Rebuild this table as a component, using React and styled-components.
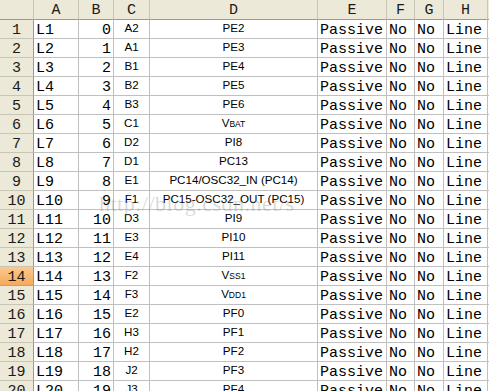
import React from "react";
import styled, { createGlobalStyle } from "styled-components";

const GlobalStyle = createGlobalStyle`
    html, body {
        margin: 0;
        padding: 0;
        background: #ffffff;
    }
    body {
        width: 489px;
        height: 391px;
        overflow: hidden;
    }
`;

const Wrap = styled.div`
    position: relative;
    width: 489px;
    height: 391px;
    overflow: hidden;
    background: #ffffff;
`;

const Sheet = styled.div`
    display: grid;
    grid-template-columns: 34px 45px 35px 36px 168px 69px 28px 29px 44px 40px;
    grid-template-rows: 20px;
    grid-auto-rows: 19px;
    width: 528px;
`;

const Cell = styled.div`
    box-sizing: border-box;
    border-right: 1px solid #c0c0c0;
    border-bottom: 1px solid #c0c0c0;
    overflow: hidden;
    white-space: nowrap;
    color: #000000;
`;

const MonoCell = styled(Cell)`
    display: flex;
    align-items: flex-end;
    justify-content: ${(p) => (p.$right ? "flex-end" : "flex-start")};
    padding: 0 2px 0 2px;
    font-family: "Liberation Mono", "DejaVu Sans Mono", monospace;
    font-size: 15px;
    line-height: 15px;
`;

const PinCell = styled(Cell)`
    text-align: center;
    padding-top: 2px;
    font-family: "Liberation Sans", Arial, sans-serif;
    font-size: 11.6px;
    line-height: 12px;
`;

const ColHead = styled.div`
    box-sizing: border-box;
    display: flex;
    align-items: flex-end;
    justify-content: center;
    padding-bottom: 1px;
    background: #ece9d8;
    border-right: 1px solid #c9c5b5;
    border-bottom: 1px solid #9d9a8c;
    font-family: "Liberation Mono", "DejaVu Sans Mono", monospace;
    font-size: 15px;
    line-height: 15px;
    color: #1a1a1a;
`;

const RowHead = styled.div`
    box-sizing: border-box;
    display: flex;
    align-items: flex-end;
    justify-content: center;
    background: ${(p) => (p.$active ? "linear-gradient(#fbc98f, #f5a95c)" : "#ece9d8")};
    border-right: 1px solid #9d9a8c;
    border-bottom: 1px solid ${(p) => (p.$active ? "#e09a50" : "#c9c5b5")};
    font-family: "Liberation Mono", "DejaVu Sans Mono", monospace;
    font-size: 15px;
    line-height: 15px;
    color: #1a1a1a;
`;

const Small = styled.span`
    font-size: 8.5px;
    text-transform: uppercase;
`;

const Watermark = styled.div`
    position: absolute;
    left: 99px;
    top: 191px;
    font-family: "Liberation Serif", "DejaVu Serif", serif;
    font-size: 22px;
    letter-spacing: 0.5px;
    color: rgba(120, 120, 120, 0.28);
    pointer-events: none;
    white-space: nowrap;
`;

const pins = [
    ["A2", "PE2"],
    ["A1", "PE3"],
    ["B1", "PE4"],
    ["B2", "PE5"],
    ["B3", "PE6"],
    ["C1", ["V", "BAT"]],
    ["D2", "PI8"],
    ["D1", "PC13"],
    ["E1", "PC14/OSC32_IN (PC14)"],
    ["F1", "PC15-OSC32_OUT (PC15)"],
    ["D3", "PI9"],
    ["E3", "PI10"],
    ["E4", "PI11"],
    ["F2", ["V", "SS1"]],
    ["F3", ["V", "DD1"]],
    ["E2", "PF0"],
    ["H3", "PF1"],
    ["H2", "PF2"],
    ["J2", "PF3"],
    ["J3", "PF4"],
];

const cols = ["A", "B", "C", "D", "E", "F", "G", "H", ""];

const App = () => {
    return (
        <Wrap>
            <GlobalStyle />
            <Sheet>
                <ColHead />
                {cols.map((c, i) => (
                    <ColHead key={i}>{c}</ColHead>
                ))}

                {pins.map(([ball, name], i) => (
                    <React.Fragment key={i}>
                        <RowHead $active={i === 13}>{i + 1}</RowHead>
                        <MonoCell>L{i + 1}</MonoCell>
                        <MonoCell $right>{i}</MonoCell>
                        <PinCell>{ball}</PinCell>
                        <PinCell>
                            {Array.isArray(name) ? (
                                <>
                                    {name[0]}
                                    <Small>{name[1]}</Small>
                                </>
                            ) : (
                                name
                            )}
                        </PinCell>
                        <MonoCell>Passive</MonoCell>
                        <MonoCell>No</MonoCell>
                        <MonoCell>No</MonoCell>
                        <MonoCell>Line</MonoCell>
                        <Cell />
                    </React.Fragment>
                ))}
            </Sheet>
            <Watermark>http://blog.csdn.net/s</Watermark>
        </Wrap>
    );
};

export default App;
